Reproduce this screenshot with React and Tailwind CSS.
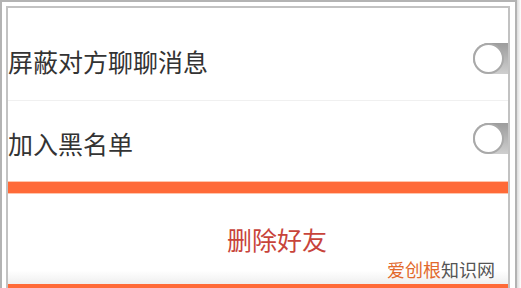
import React from "react";

const Toggle = ({ className }) => {
  return (
    <div
      className={
        "relative ml-auto mr-[-30px] h-[31px] w-[65px] shrink-0 rounded-full bg-gradient-to-b from-[#9c9c9c] to-[#cfcfcf] " +
        className
      }
    >
      <div className="h-[31px] w-[31px] rounded-full border-2 border-[#a9a9a9] bg-white"></div>
    </div>
  );
};

const App = () => {
  return (
    <div
      className="relative flex h-[288px] w-[521px] overflow-hidden bg-white"
      style={{ fontFamily: '"Noto Sans CJK SC", "Noto Sans", sans-serif' }}
    >
      <div className="h-full w-[517px] shrink-0 border-x-2 border-t-2 border-[#b3b3b3] pl-[4px] pr-[5px] pt-[4px]">
        <div className="h-full border-x-2 border-t-2 border-[#c2c2c2]">
          <div className="flex h-full w-[500px] flex-col overflow-hidden bg-white">
            <div className="flex h-[92px] shrink-0 items-center pt-[14px]">
              <span className="text-[25px] leading-[25px] text-[#333]">屏蔽对方聊聊消息</span>
              <Toggle className="mb-[6px]" />
            </div>
            <div className="h-px shrink-0 bg-[#f0f0f0]"></div>
            <div className="flex h-[80px] shrink-0 items-center pt-[4px]">
              <span className="text-[25px] leading-[25px] text-[#333]">加入黑名单</span>
              <Toggle className="mb-[10px]" />
            </div>
            <div className="h-[13px] shrink-0 border-y border-[#ffc6ad] bg-[#ff6a38]"></div>
            <div className="flex h-[90px] shrink-0 items-center justify-center bg-gradient-to-b from-white via-white via-85% to-[#efefef] pl-[38px]">
              <span className="text-[25px] leading-[25px] text-[#c8443b]">删除好友</span>
            </div>
            <div className="h-[10px] shrink-0 bg-[#ff6a38]"></div>
          </div>
        </div>
      </div>
      <div className="h-full w-[4px] bg-gradient-to-r from-[#dcdcdc] to-white"></div>
      <div className="absolute right-[26px] top-[260px] text-[18px] leading-[18px]">
        <span className="text-[#e2692c]">爱创根</span>
        <span className="text-[#555]">知识网</span>
      </div>
    </div>
  );
};

export default App;
